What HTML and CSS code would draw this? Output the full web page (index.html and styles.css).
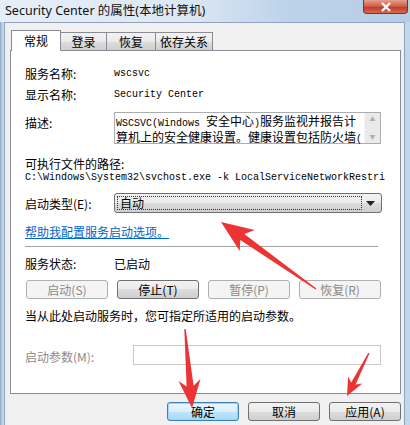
FILE: index.html
```html
<!DOCTYPE html>
<html lang="zh-CN">
<head>
    <meta charset="UTF-8">
    <title>Security Center 的属性(本地计算机)</title>
    <link rel="stylesheet" href="styles.css">
</head>
<body>
    <div class="window">
        <div class="titlebar">
            <span class="title">Security Center 的属性(本地计算机)</span>
            <span class="close">
                <svg width="12" height="10" viewBox="0 0 12 10"><path d="M2 1 L10 9 M10 1 L2 9" stroke="#fff" stroke-width="2.4"/></svg>
            </span>
        </div>
        <div class="client">
            <div class="tabs">
                <div class="tab active">常规</div>
                <div class="tab w46">登录</div>
                <div class="tab w49">恢复</div>
                <div class="tab w57">依存关系</div>
            </div>
            <div class="panel">
                <div class="row r-name">
                    <span class="label">服务名称:</span>
                    <span class="mono">wscsvc</span>
                </div>
                <div class="row r-display">
                    <span class="label">显示名称:</span>
                    <span class="mono">Security Center</span>
                </div>
                <div class="row r-desc">
                    <span class="label desc-label">描述:</span>
                    <div class="textbox">
                        <div class="desc-text">
                            <div><span class="lat">WSCSVC(Windows </span>安全中心<span class="lat">)</span>服务监视并报告计</div>
                            <div>算机上的安全健康设置。健康设置包括防火墙<span class="lat">(</span></div>
                        </div>
                        <div class="scrollbar">
                            <span class="sb-arrow">&#9650;</span>
                            <span class="sb-arrow">&#9660;</span>
                        </div>
                    </div>
                </div>
                <div class="row r-exe">可执行文件的路径:</div>
                <div class="row r-path mono">C:\Windows\System32\svchost.exe -k LocalServiceNetworkRestri</div>
                <div class="row r-startup">
                    <span class="label">启动类型(E):</span>
                    <div class="select">
                        <span class="focus">自动</span>
                        <svg class="caret" width="9" height="5" viewBox="0 0 9 5"><path d="M0 0 H9 L4.5 5 Z" fill="#222"/></svg>
                    </div>
                </div>
                <div class="row r-link"><a class="link" href="#">帮助我配置服务启动选项。</a></div>
                <div class="separator"></div>
                <div class="row r-status">
                    <span class="label">服务状态:</span>
                    <span>已启动</span>
                </div>
                <div class="svc-buttons">
                    <button class="btn" disabled>启动(S)</button>
                    <button class="btn">停止(T)</button>
                    <button class="btn" disabled>暂停(P)</button>
                    <button class="btn" disabled>恢复(R)</button>
                </div>
                <div class="row r-hint">当从此处启动服务时，您可指定所适用的启动参数。</div>
                <div class="row r-params">
                    <span class="label params-label">启动参数(M):</span>
                    <div class="input"></div>
                </div>
            </div>
            <div class="actions">
                <button class="btn default">确定</button>
                <button class="btn">取消</button>
                <button class="btn">应用(A)</button>
            </div>
        </div>

        <svg class="arrows" width="410" height="425" viewBox="0 0 410 425">
            <polygon points="221,222 254.7,229.9 244.3,234.1 316.4,288.4 315.6,289.6 240.3,240 239.7,251.1" />
            <polygon points="192,408 178.5,381.1 186.6,386.4 184.3,329.1 185.7,328.9 193.6,385.8 200.5,379.1" />
            <polygon points="347,396 348.1,376.4 351.2,382.4 368.4,352.7 369.6,353.3 355.6,384.6 362.3,383.6" />
        </svg>
    </div>
</body>
</html>
```

FILE: styles.css
```css
body {
    margin: 0;
    font-family: "Noto Sans CJK SC", sans-serif;
    font-size: 12px;
    color: #000;
}
.window {
    position: relative;
    width: 410px;
    height: 425px;
    overflow: hidden;
    background: linear-gradient(to right, #8fa9c8 0, #c9dbef 3px, #bcd2ea 60%, #c3d7ec);
    display: flex;
    flex-direction: column;
}
.titlebar {
    height: 22px;
    display: flex;
    justify-content: space-between;
    align-items: flex-start;
    background: linear-gradient(to right, #e6eef7 0, #dde8f4 45%, #bdd3ea 70%, #b6cde7);
}
.title {
    font-family: "Noto Sans", "Noto Sans CJK SC", sans-serif;
    font-size: 12.5px;
    line-height: 22px;
    padding-left: 5px;
    color: #111;
}
.close {
    width: 43px;
    height: 13px;
    margin-right: 2px;
    border: 1px solid #6b3a33;
    border-top: none;
    border-radius: 0 0 4px 4px;
    background: linear-gradient(#e4a08f, #cf5a43 50%, #c0392a 55%, #d66a4d);
    display: flex;
    justify-content: center;
    align-items: center;
}
.client {
    flex: 1;
    margin: 0 5px 0 4px;
    border: 1px solid #8fa3bb;
    border-bottom: none;
    background: #f0f0f0;
    padding: 7px 0 0 5px;
}
.tabs {
    display: flex;
    align-items: flex-end;
    height: 20px;
    padding-left: 1px;
}
.tab {
    width: 46px;
    height: 18px;
    box-sizing: border-box;
    border: 1px solid #898c95;
    border-bottom: none;
    border-left: none;
    background: linear-gradient(#f2f2f2, #ebebeb 50%, #dddddd 50%, #cfcfcf);
    text-align: center;
    line-height: 18px;
}
.tab.w46 { width: 46px; }
.tab.w49 { width: 49px; }
.tab.w57 { width: 57px; }
.tab.active {
    width: 50px;
    height: 21px;
    margin-bottom: -1px;
    border-left: 1px solid #898c95;
    background: #fff;
    position: relative;
    z-index: 1;
    line-height: 20px;
}
.panel {
    width: 391px;
    height: 344px;
    box-sizing: border-box;
    border: 1px solid #898c95;
    background: #fff;
    padding: 12px 18px 0 14px;
    display: flex;
    flex-direction: column;
}
.row {
    display: flex;
    align-items: center;
    flex: none;
}
.label {
    width: 89px;
    flex: none;
}
.mono {
    font-family: "Liberation Mono", monospace;
    font-size: 10px;
}
.r-name { height: 20px; }
.r-display { height: 20px; margin-top: 1px; }
.r-desc { height: 32px; margin-top: 8px; align-items: flex-start; }
.desc-label { line-height: 14px; padding-top: 4px; }
.textbox {
    width: 267px;
    height: 32px;
    box-sizing: border-box;
    border: 1px solid #abadb3;
    display: flex;
}
.desc-text {
    flex: 1;
    padding: 1px 0 0 1px;
    line-height: 13px;
    white-space: nowrap;
    font-size: 12px;
}
.lat {
    font-family: "Liberation Mono", monospace;
    font-size: 10px;
}
.scrollbar {
    width: 15px;
    background: #eaeaea;
    border-left: 1px solid #f4f4f4;
    display: flex;
    flex-direction: column;
    justify-content: space-between;
    align-items: center;
}
.sb-arrow {
    font-size: 6px;
    line-height: 12px;
    color: #b0b0b0;
}
.r-exe { height: 16px; margin-top: 11px; }
.r-path {
    height: 13px;
    white-space: nowrap;
}
.r-startup { height: 20px; margin-top: 9px; }
.select {
    width: 268px;
    height: 20px;
    box-sizing: border-box;
    border: 1px solid #707070;
    border-radius: 3px;
    background: linear-gradient(#f2f2f2, #ebebeb 50%, #dddddd 50%, #cfcfcf);
    display: flex;
    align-items: center;
    padding: 0 6px 0 2px;
}
.focus {
    width: 245px;
    height: 14px;
    box-sizing: border-box;
    border: 1px dotted #333;
    line-height: 12px;
    padding-left: 2px;
}
.caret { margin-left: auto; }
.r-link { height: 16px; margin-top: 10px; }
.link {
    color: #0066cc;
    text-decoration: underline;
}
.separator {
    height: 1px;
    width: 353px;
    margin-top: 7px;
    background: #a0a0a0;
    flex: none;
}
.r-status { height: 20px; margin-top: 6px; }
.svc-buttons {
    display: grid;
    grid-template-columns: repeat(4, 1fr);
    gap: 9px;
    width: 355px;
    margin: 7px 0 0 1px;
}
.btn {
    height: 19px;
    padding: 0;
    font-family: "Noto Sans CJK SC", sans-serif;
    font-size: 12px;
    line-height: 17px;
    color: #000;
    border: 1px solid #707070;
    border-radius: 3px;
    background: linear-gradient(#f2f2f2, #ebebeb 50%, #dddddd 50%, #cfcfcf);
}
.btn:disabled {
    color: #8a8a8a;
    border-color: #adb2b5;
    background: #f4f4f4;
}
.r-hint { height: 16px; margin-top: 8px; }
.r-params { height: 20px; margin-top: 22px; }
.params-label {
    width: 108px;
    color: #8a8a8a;
    padding-top: 3px;
}
.input {
    width: 248px;
    height: 20px;
    box-sizing: border-box;
    border: 1px solid #c8c8c8;
    background: #fff;
}
.actions {
    width: 391px;
    display: flex;
    justify-content: flex-end;
    gap: 9px;
    margin-top: 8px;
}
.actions .btn { width: 72px; }
.btn.default {
    border-color: #3c7fb1;
    box-shadow: inset 0 0 0 1px #9fd6f5;
    background: linear-gradient(#eaf6fd, #d9f0fc 50%, #bee6fd 50%, #a7d9f5);
}
.arrows {
    position: absolute;
    top: 0;
    left: 0;
    pointer-events: none;
}
.arrows polygon { fill: #ec3434; }
```
